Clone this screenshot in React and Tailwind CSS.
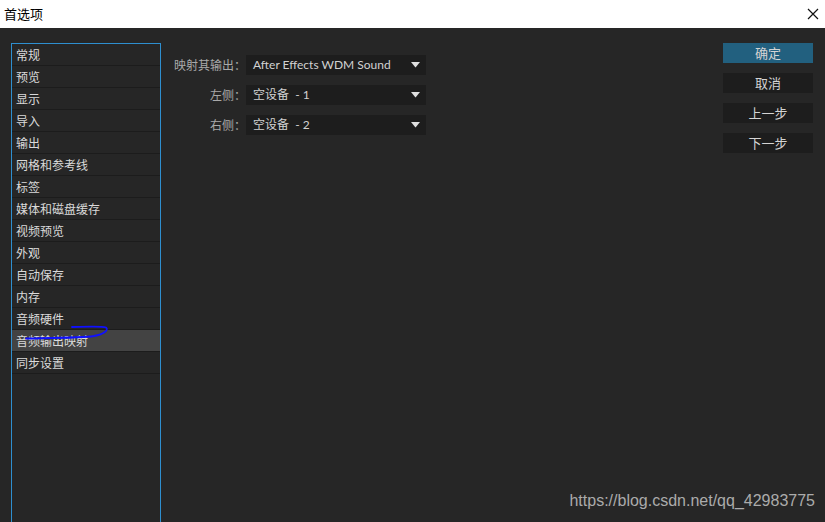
import React from "react";

const items = [
  "常规","预览","显示","导入","输出","网格和参考线","标签","媒体和磁盘缓存","视频预览","外观","自动保存","内存","音频硬件","音频输出映射","同步设置",
];

const cjk = { fontFamily: '"Noto Sans CJK SC", "Noto Sans", sans-serif' };
const mix = { fontFamily: 'Lato, "Noto Sans CJK SC", sans-serif' };

function Select({ text }) {
  return (
    <div className="flex items-center justify-between w-[180px] h-[20px] bg-[#1d1d1d] pl-[7px] pr-[6px] text-[12px] text-[#d2d2d2]" style={mix}>
      <span className="leading-none whitespace-pre">{text}</span>
      <svg width="9" height="6" viewBox="0 0 9 6"><path d="M0 0h9L4.5 5.5z" fill="#e0e0e0" /></svg>
    </div>
  );
}

function Btn({ children, primary }) {
  return (
    <div className={`w-[90px] h-[20px] flex items-center justify-center text-[13px] text-[#d4d4d4] ${primary ? "bg-[#22607f]" : "bg-[#1d1d1d]"}`}>
      {children}
    </div>
  );
}

export default function App() {
  return (
    <div className="w-[825px] h-[522px] overflow-hidden flex flex-col bg-[#262626]" style={cjk}>
      <div className="h-[28px] bg-white flex items-center justify-between pl-[4px] pr-[6px] shrink-0">
        <span className="text-[13px] text-black">首选项</span>
        <svg width="12" height="12" viewBox="0 0 12 12"><path d="M1 1l10 10M11 1L1 11" stroke="#111" strokeWidth="1.2" /></svg>
      </div>
      <div className="flex flex-1 min-h-0 pt-[15px] relative">
        <div className="ml-[11px] w-[150px] border border-b-0 border-[#2e8fd0] flex flex-col relative">
          {items.map((t, i) => (
            <div
              key={t}
              className={`h-[22px] shrink-0 border-b border-[#1c1c1c] pl-[4px] flex items-center text-[12px] text-[#dadada] ${i === 13 ? "bg-[#434343]" : ""}`}
            >
              {t}
            </div>
          ))}
          <svg className="absolute left-0 top-[280px]" width="120" height="20" viewBox="0 0 120 20">
            <path d="M14 14.5 C40 14, 70 14, 82 12 C92 10, 97 6, 94 3.5 C90 2, 80 2.5, 60 3" fill="none" stroke="#1010ff" strokeWidth="1.8" strokeLinecap="round" />
          </svg>
        </div>
        <div className="flex-1 flex justify-between">
          <div className="flex flex-col gap-[10px] pt-[12px]">
            {[
              ["映射其输出：", "After Effects WDM Sound"],
              ["左侧：", "空设备  - 1"],
              ["右侧：", "空设备  - 2"],
            ].map(([l, v]) => (
              <div key={l} className="flex items-center">
                <span className="w-[85px] text-right whitespace-nowrap text-[12px] text-[#a9a9a9]">{l}</span>
                <Select text={v} />
              </div>
            ))}
          </div>
          <div className="flex flex-col gap-[10px] pr-[12px]">
            <Btn primary>确定</Btn>
            <Btn>取消</Btn>
            <Btn>上一步</Btn>
            <Btn>下一步</Btn>
          </div>
        </div>
        <div className="absolute right-[10px] bottom-[9px] text-[16px] text-[#ababab]" style={{ fontFamily: '"Liberation Sans", Arial, sans-serif' }}>
          https://blog.csdn.net/qq_42983775
        </div>
      </div>
    </div>
  );
}
